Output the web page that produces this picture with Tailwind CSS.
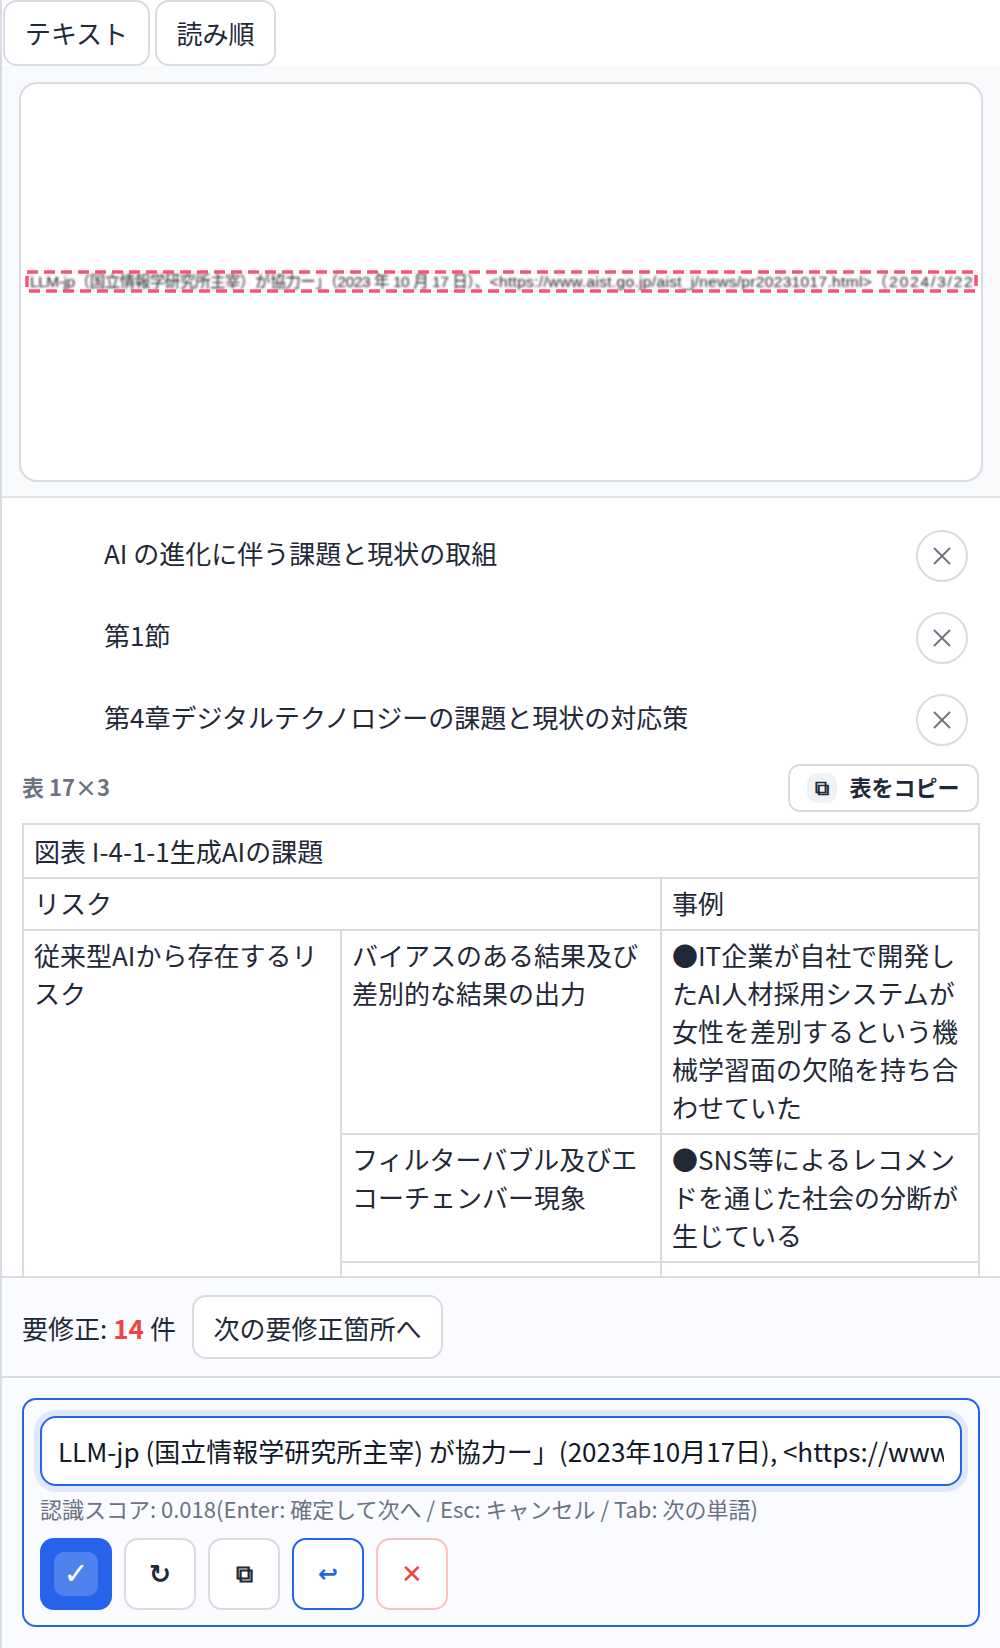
<!DOCTYPE html>
<html lang="ja">
<head>
    <meta charset="UTF-8">
    <meta name="viewport" content="width=device-width, initial-scale=1.0">
    <title>テキスト</title>
    <script src="https://cdn.jsdelivr.net/npm/@tailwindcss/browser@4"></script>
</head>
<body class="bg-white font-['Noto_Sans_CJK_JP','Noto_Sans',sans-serif] text-[#1f2937]">
<div class="w-[1000px] h-[1648px] flex flex-col border-l-2 border-[#d8dbe1] overflow-hidden">

    <!-- タブ -->
    <div class="h-[66px] shrink-0 flex gap-[5px] pl-px">
        <button class="w-[147px] h-[66px] pb-[2px] bg-white border-2 border-[#d8dbe1] rounded-[14px] text-[26px]">テキスト</button>
        <button class="w-[121px] h-[66px] pb-[2px] bg-white border-2 border-[#d8dbe1] rounded-[14px] text-[26px]">読み順</button>
    </div>

    <!-- ページ画像 -->
    <div class="h-[432px] shrink-0 bg-[#f8f9fb] border-b-2 border-[#e0e3e8] pl-[17px] pr-[15px] pt-[16px]">
        <div class="w-[964px] h-[400px] bg-white border-2 border-[#d8dbe1] rounded-[18px] flex items-center">
            <div class="relative ml-[4px] -mt-px w-[953px] h-[23px] overflow-hidden flex items-center">
                <span class="pl-[5px] whitespace-nowrap text-[15.5px] tracking-[-0.46px] text-[#222] blur-[0.8px] font-['Liberation_Sans','Noto_Sans_CJK_JP',sans-serif]">LLM-jp（国立情報学研究所主宰）が協力ー」（2023 年 10 月 17 日）、<span class="tracking-[0.33px]">&lt;https://www.aist.go.jp/aist_j/news/pr20231017.html&gt;</span><span class="tracking-[1.8px]">（2024/3/22</span></span>
                <svg class="absolute inset-0 blur-[0.4px]" width="953" height="23" fill="none">
                    <rect x="2" y="2" width="949" height="19" stroke="#fb5274" stroke-width="3.5" stroke-dasharray="11 6"/>
                </svg>
            </div>
        </div>
    </div>

    <!-- 抽出結果 -->
    <div class="flex-1 min-h-0 overflow-hidden border-b-2 border-[#d8dbe1] px-[20px] pt-[32px]">
        <div class="flex flex-col gap-[30px]">
            <div class="flex items-center justify-between pl-[82px] pr-[12px]">
                <p class="text-[26px] leading-[38px] -mt-[6px]">AI の進化に伴う課題と現状の取組</p>
                <button class="w-[52px] h-[52px] rounded-full border-2 border-[#d8dbe1] flex items-center justify-center">
                    <svg width="18" height="18" viewBox="0 0 18 18" stroke="#6b7280" stroke-width="1.8"><path d="M1 1L17 17M17 1L1 17"/></svg>
                </button>
            </div>
            <div class="flex items-center justify-between pl-[82px] pr-[12px]">
                <p class="text-[26px] leading-[38px] -mt-[6px]">第1節</p>
                <button class="w-[52px] h-[52px] rounded-full border-2 border-[#d8dbe1] flex items-center justify-center">
                    <svg width="18" height="18" viewBox="0 0 18 18" stroke="#6b7280" stroke-width="1.8"><path d="M1 1L17 17M17 1L1 17"/></svg>
                </button>
            </div>
            <div class="flex items-center justify-between pl-[82px] pr-[12px]">
                <p class="text-[26px] leading-[38px] -mt-[6px]">第4章デジタルテクノロジーの課題と現状の対応策</p>
                <button class="w-[52px] h-[52px] rounded-full border-2 border-[#d8dbe1] flex items-center justify-center">
                    <svg width="18" height="18" viewBox="0 0 18 18" stroke="#6b7280" stroke-width="1.8"><path d="M1 1L17 17M17 1L1 17"/></svg>
                </button>
            </div>
        </div>

        <div class="flex items-center justify-between mt-[18px] mb-[11px] h-[48px] pr-px">
            <span class="text-[22px] font-bold text-[#6b7280] -mt-[4px]">表 17×3</span>
            <button class="w-[191px] h-[48px] border-2 border-[#d8dbe1] rounded-[12px] flex items-center justify-center gap-[12px] bg-white">
                <span class="w-[30px] h-[30px] rounded-[10px] bg-[#f1f2f4] flex items-center justify-center font-['DejaVu_Sans'] font-bold text-[20px] leading-none">⧉</span>
                <span class="text-[22px] font-bold -mt-[3px]">表をコピー</span>
            </button>
        </div>

        <table class="table-fixed border-collapse w-[957px] text-[26px] leading-[38px]">
            <colgroup>
                <col class="w-[318px]">
                <col class="w-[320px]">
                <col class="w-[318px]">
            </colgroup>
            <tbody>
                <tr>
                    <td colspan="3" class="border-2 border-[#d8dbe1] px-[10px] py-[7px] align-top">図表 I-4-1-1生成AIの課題</td>
                </tr>
                <tr>
                    <td colspan="2" class="border-2 border-[#d8dbe1] px-[10px] pt-[5px] pb-[7px] align-top">リスク</td>
                    <td class="border-2 border-[#d8dbe1] px-[10px] pt-[5px] pb-[7px] align-top">事例</td>
                </tr>
                <tr>
                    <td rowspan="3" class="border-2 border-[#d8dbe1] px-[10px] pt-[5px] pb-[7px] align-top">従来型AIから存在するリスク</td>
                    <td class="border-2 border-[#d8dbe1] px-[10px] pt-[5px] pb-[7px] align-top">バイアスのある結果及び差別的な結果の出力</td>
                    <td class="border-2 border-[#d8dbe1] px-[10px] pt-[5px] pb-[7px] align-top">●IT企業が自社で開発したAI人材採用システムが女性を差別するという機械学習面の欠陥を持ち合わせていた</td>
                </tr>
                <tr>
                    <td class="border-2 border-[#d8dbe1] px-[10px] pt-[5px] pb-[7px] align-top">フィルターバブル及びエコーチェンバー現象</td>
                    <td class="border-2 border-[#d8dbe1] px-[10px] pt-[5px] pb-[7px] align-top">●SNS等によるレコメンドを通じた社会の分断が生じている</td>
                </tr>
                <tr>
                    <td class="border-2 border-[#d8dbe1] px-[10px] py-[6px] align-top">多様性の喪失</td>
                    <td class="border-2 border-[#d8dbe1] px-[10px] py-[6px] align-top">●社会全体が同じモデルを使う</td>
                </tr>
            </tbody>
        </table>
    </div>

    <!-- 要修正 -->
    <div class="h-[100px] shrink-0 bg-[#fafbff] border-b-2 border-[#d8dbe1] pl-[20px] pt-[17px] flex items-start gap-[16px]">
        <span class="text-[26px] h-[64px] flex items-center gap-[6px]"><span>要修正:</span><span class="font-bold text-[#ef4444]">14</span><span>件</span></span>
        <button class="w-[251px] h-[64px] bg-white border-2 border-[#d8dbe1] rounded-[14px] text-[26px]">次の要修正箇所へ</button>
    </div>

    <!-- 修正フォーム -->
    <div class="h-[270px] shrink-0 bg-[#fafbff] pl-[20px] pt-[20px]">
        <div class="w-[958px] h-[229px] border-2 border-[#2563eb] rounded-[14px] px-[16px] pt-[16px]">
            <input type="text" readonly value="LLM-jp (国立情報学研究所主宰) が協力ー」(2023年10月17日), &lt;https://www.aist.go.jp/aist_j/news/pr20231017.html&gt; (2024/3/22)"
                class="block w-[922px] h-[70px] pb-[2px] bg-white border-2 border-[#2563eb] rounded-[16px] px-[16px] text-[26px] text-[#111827] outline-none ring-[6px] ring-[#dfe8fd]">
            <p class="mt-[5px] text-[22px] leading-[34px] text-[#6b7280]">認識スコア: 0.018(Enter: 確定して次へ / Esc: キャンセル / Tab: 次の単語)</p>
            <div class="flex gap-[12px] mt-[13px]">
                <button class="w-[72px] h-[72px] rounded-[14px] bg-[#2563eb] flex items-center justify-center">
                    <span class="w-[44px] h-[44px] rounded-[10px] bg-white/20 flex items-center justify-center text-white text-[30px] font-['DejaVu_Sans'] font-bold leading-none">✓</span>
                </button>
                <button class="w-[72px] h-[72px] rounded-[14px] bg-white border-2 border-[#d8dbe1] flex items-center justify-center text-[#1f2937] text-[26px] font-['DejaVu_Sans'] font-bold leading-none">↻</button>
                <button class="w-[72px] h-[72px] rounded-[14px] bg-white border-2 border-[#d8dbe1] flex items-center justify-center text-[#1f2937] text-[24px] font-['DejaVu_Sans'] font-bold leading-none">⧉</button>
                <button class="w-[72px] h-[72px] rounded-[14px] bg-white border-2 border-[#2563eb] flex items-center justify-center text-[#2563eb] text-[24px] font-['DejaVu_Sans'] font-bold leading-none">↩</button>
                <button class="w-[72px] h-[72px] rounded-[14px] bg-white border-2 border-[#fbc0c0] flex items-center justify-center text-[#ef4444] text-[26px] font-['DejaVu_Sans'] font-bold leading-none">✕</button>
            </div>
        </div>
    </div>
</div>
</body>
</html>
